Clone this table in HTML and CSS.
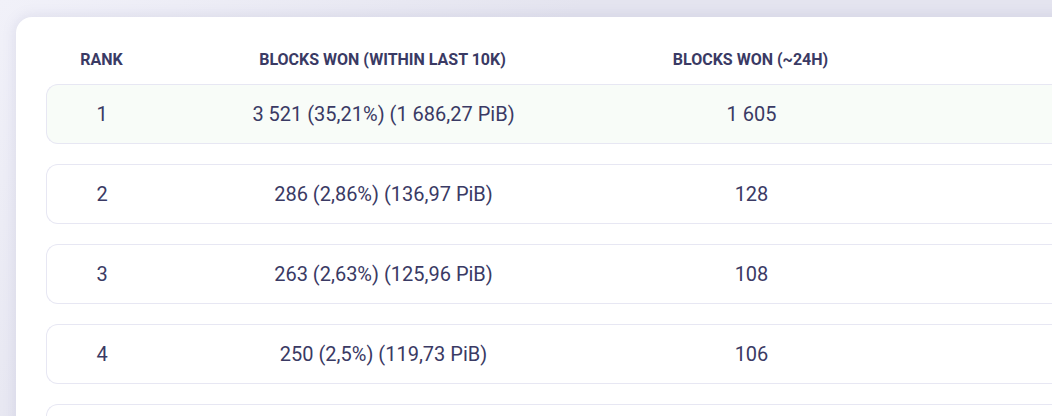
FILE: index.html
```html
<!DOCTYPE html>
<html>
<head>
<meta charset="utf-8">
<link rel="stylesheet" href="styles.css">
</head>
<body>
<div class="card">
  <div class="head">
    <div class="cell">RANK</div>
    <div class="cell">BLOCKS WON (WITHIN LAST 10K)</div>
    <div class="cell">BLOCKS WON (~24H)</div>
    <div class="cell"></div>
  </div>
  <div class="row top">
    <div class="cell">1</div>
    <div class="cell">3 521 (35,21%) (1 686,27 PiB)</div>
    <div class="cell">1 605</div>
    <div class="cell"></div>
  </div>
  <div class="row">
    <div class="cell">2</div>
    <div class="cell">286 (2,86%) (136,97 PiB)</div>
    <div class="cell">128</div>
    <div class="cell"></div>
  </div>
  <div class="row">
    <div class="cell">3</div>
    <div class="cell">263 (2,63%) (125,96 PiB)</div>
    <div class="cell">108</div>
    <div class="cell"></div>
  </div>
  <div class="row">
    <div class="cell">4</div>
    <div class="cell">250 (2,5%) (119,73 PiB)</div>
    <div class="cell">106</div>
    <div class="cell"></div>
  </div>
  <div class="row">
    <div class="cell"></div>
    <div class="cell"></div>
    <div class="cell"></div>
    <div class="cell"></div>
  </div>
</div>
</body>
</html>
```
FILE: styles.css
```css
html, body {
  margin: 0;
  padding: 0;
  height: 100%;
  overflow: hidden;
}
body {
  background: linear-gradient(135deg, #f1f1f9 0%, #e4e4ef 40%, #e4e4ef 100%);
  font-family: Roboto, "Liberation Sans", sans-serif;
  color: #3a3a64;
}
.card {
  margin: 17px 0 0 16px;
  width: 1100px;
  background: #ffffff;
  border-radius: 16px;
  box-shadow: 0 0 14px rgba(120, 120, 170, 0.18);
  padding: 30px 0 0 30px;
  display: flex;
  flex-direction: column;
  gap: 20px;
  height: 600px;
  box-sizing: border-box;
}
.head, .row {
  display: grid;
  grid-template-columns: 111px 451px 285px 1fr;
  align-items: center;
}
.head {
  height: 24px;
  margin-bottom: -7px;
  font-size: 16px;
  font-weight: 700;
}
.row {
  height: 60px;
  flex-shrink: 0;
  box-sizing: border-box;
  border: 1px solid #e7e7f3;
  border-right: none;
  border-radius: 12px 0 0 12px;
  font-size: 20px;
}
.row .cell:first-child {
  margin-left: -1px;
}
.row.top {
  background: #f8fcf8;
}
.cell {
  text-align: center;
  white-space: nowrap;
}
```
